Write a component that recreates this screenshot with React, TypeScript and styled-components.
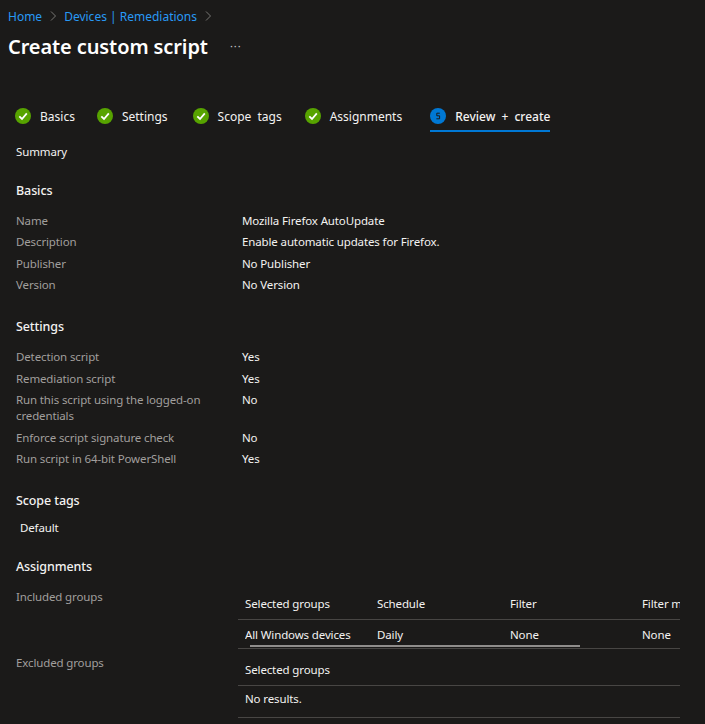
import React from 'react';
import styled, { createGlobalStyle } from 'styled-components';

const GlobalStyle = createGlobalStyle`
  html, body {
    margin: 0;
    padding: 0;
    background: #1b1a19;
  }
  body {
    font-family: 'Noto Sans', 'Open Sans', sans-serif;
    font-size: 11.5px;
    letter-spacing: -0.13px;
    color: #f3f2f1;
  }
`;

const Page = styled.div`
  width: 705px;
  height: 724px;
  overflow: hidden;
  display: flex;
  flex-direction: column;
  background: #1b1a19;
`;

const Breadcrumb = styled.nav`
  display: flex;
  align-items: center;
  height: 18px;
  margin: 7px 0 0 8px;
  letter-spacing: 0;
`;

const Crumb = styled.a`
  color: #2899f5;
  font-size: 12px;
`;

const Chevron = styled.svg`
  width: 8px;
  height: 10px;
  margin: 0 7px;
  fill: none;
  stroke: #797775;
  stroke-width: 1;
`;

const TitleRow = styled.div`
  display: flex;
  align-items: center;
  height: 30px;
  margin: 6px 0 0 8px;
`;

const Title = styled.h1`
  margin: 0;
  font-size: 20px;
  font-weight: 600;
  letter-spacing: -0.1px;
  color: #ffffff;
`;

const More = styled.span`
  margin: -2px 0 0 22px;
  font-size: 11px;
  letter-spacing: 1px;
  color: #c8c6c4;
`;

const Tabs = styled.div`
  display: flex;
  height: 36px;
  margin: 41px 0 0 15px;
`;

const Tab = styled.div<{ $active?: boolean; $gap: number }>`
  display: flex;
  align-items: center;
  gap: 9px;
  height: 28px;
  margin-right: ${p => p.$gap}px;
  font-size: 12px;
  letter-spacing: 0;
  word-spacing: 3px;
  font-weight: ${p => (p.$active ? 500 : 400)};
  border-bottom: 2px solid ${p => (p.$active ? '#0078d4' : 'transparent')};
`;

const StepIcon = styled.svg`
  width: 16px;
  height: 16px;
`;

const Content = styled.main`
  display: flex;
  flex-direction: column;
  padding-left: 16px;
`;

const Summary = styled.div`
  height: 18px;
  line-height: 18px;
  margin-top: 5px;
`;

const SectionTitle = styled.h2<{ $top: number }>`
  margin: ${p => p.$top}px 0 0;
  height: 18px;
  line-height: 18px;
  font-size: 12.5px;
  font-weight: 500;
  letter-spacing: -0.1px;
`;

const Details = styled.dl<{ $top: number }>`
  display: grid;
  grid-template-columns: 206px 1fr;
  column-gap: 20px;
  row-gap: 5.5px;
  margin: ${p => p.$top}px 0 0;
  line-height: 16px;
`;

const Label = styled.dt`
  margin: 0;
  color: #a19f9d;
`;

const Value = styled.dd`
  margin: 0;
`;

const Tag = styled.div`
  height: 18px;
  line-height: 18px;
  margin: 9px 0 0 4px;
`;

const Assign = styled.div`
  display: grid;
  grid-template-columns: 222px 442px;
  margin-top: 13px;
`;

const AssignLabel = styled.div<{ $top: number }>`
  color: #a19f9d;
  line-height: 16px;
  padding-top: ${p => p.$top}px;
`;

const Table = styled.div`
  display: flex;
  flex-direction: column;
  overflow: hidden;
`;

const TableRow = styled.div<{ $height: number; $top: number }>`
  position: relative;
  box-sizing: border-box;
  display: grid;
  grid-template-columns: 132px 133px 132px 132px;
  align-items: start;
  flex-shrink: 0;
  width: 600px;
  height: ${p => p.$height}px;
  padding: ${p => p.$top}px 0 0 7px;
  line-height: 16px;
  border-bottom: 1px solid #484644;
`;

const Cell = styled.div`
  white-space: nowrap;
  overflow: hidden;
`;

const Redaction = styled.div`
  position: absolute;
  left: 12px;
  bottom: 1px;
  width: 330px;
  height: 2px;
  background: #8f8d8b;
`;

const Passed = () => (
  <StepIcon viewBox="0 0 16 16">
    <circle cx="8" cy="8" r="8" fill="#57a300" />
    <path d="M4.3 8.3 7 11l4.8-5.6" fill="none" stroke="#fff" strokeWidth="1.8" />
  </StepIcon>
);

const Current = () => (
  <StepIcon viewBox="0 0 16 16">
    <circle cx="8" cy="8" r="8" fill="#0078d4" />
    <path d="M9.8 5.2H6.8V7.8H9.6V10.8H6.4" fill="none" stroke="#1b1a19" strokeWidth="1" />
  </StepIcon>
);

const Arrow = () => (
  <Chevron viewBox="0 0 8 10">
    <path d="M2 .5 6.5 5 2 9.5" />
  </Chevron>
);

const steps = [
  { name: 'Basics', gap: 22 },
  { name: 'Settings', gap: 25 },
  { name: 'Scope tags', gap: 23 },
  { name: 'Assignments', gap: 28 }
];

const App: React.FC = () => (
  <Page>
    <GlobalStyle />
    <Breadcrumb>
      <Crumb>Home</Crumb>
      <Arrow />
      <Crumb>Devices | Remediations</Crumb>
      <Arrow />
    </Breadcrumb>
    <TitleRow>
      <Title>Create custom script</Title>
      <More>···</More>
    </TitleRow>
    <Tabs>
      {steps.map(s => (
        <Tab key={s.name} $gap={s.gap}>
          <Passed />
          {s.name}
        </Tab>
      ))}
      <Tab $active $gap={0}>
        <Current />
        Review + create
      </Tab>
    </Tabs>
    <Content>
      <Summary>Summary</Summary>

      <SectionTitle $top={21}>Basics</SectionTitle>
      <Details $top={12.5}>
        <Label>Name</Label>
        <Value>Mozilla Firefox AutoUpdate</Value>
        <Label>Description</Label>
        <Value>Enable automatic updates for Firefox.</Value>
        <Label>Publisher</Label>
        <Value>No Publisher</Value>
        <Label>Version</Label>
        <Value>No Version</Value>
      </Details>

      <SectionTitle $top={24.5}>Settings</SectionTitle>
      <Details $top={13.5}>
        <Label>Detection script</Label>
        <Value>Yes</Value>
        <Label>Remediation script</Label>
        <Value>Yes</Value>
        <Label>Run this script using the logged-on credentials</Label>
        <Value>No</Value>
        <Label>Enforce script signature check</Label>
        <Value>No</Value>
        <Label>Run script in 64-bit PowerShell</Label>
        <Value>Yes</Value>
      </Details>

      <SectionTitle $top={24.5}>Scope tags</SectionTitle>
      <Tag>Default</Tag>

      <SectionTitle $top={21}>Assignments</SectionTitle>
      <Assign>
        <AssignLabel $top={0}>Included groups</AssignLabel>
        <Table>
          <TableRow $height={31} $top={7}>
            <Cell>Selected groups</Cell>
            <Cell>Schedule</Cell>
            <Cell>Filter</Cell>
            <Cell>Filter mode</Cell>
          </TableRow>
          <TableRow $height={29} $top={7}>
            <Cell>All Windows devices</Cell>
            <Cell>Daily</Cell>
            <Cell>None</Cell>
            <Cell>None</Cell>
            <Redaction />
          </TableRow>
        </Table>
        <AssignLabel $top={6}>Excluded groups</AssignLabel>
        <Table>
          <TableRow $height={37} $top={13}>
            <Cell>Selected groups</Cell>
          </TableRow>
          <TableRow $height={32} $top={5}>
            <Cell>No results.</Cell>
          </TableRow>
        </Table>
      </Assign>
    </Content>
  </Page>
);

export default App;
